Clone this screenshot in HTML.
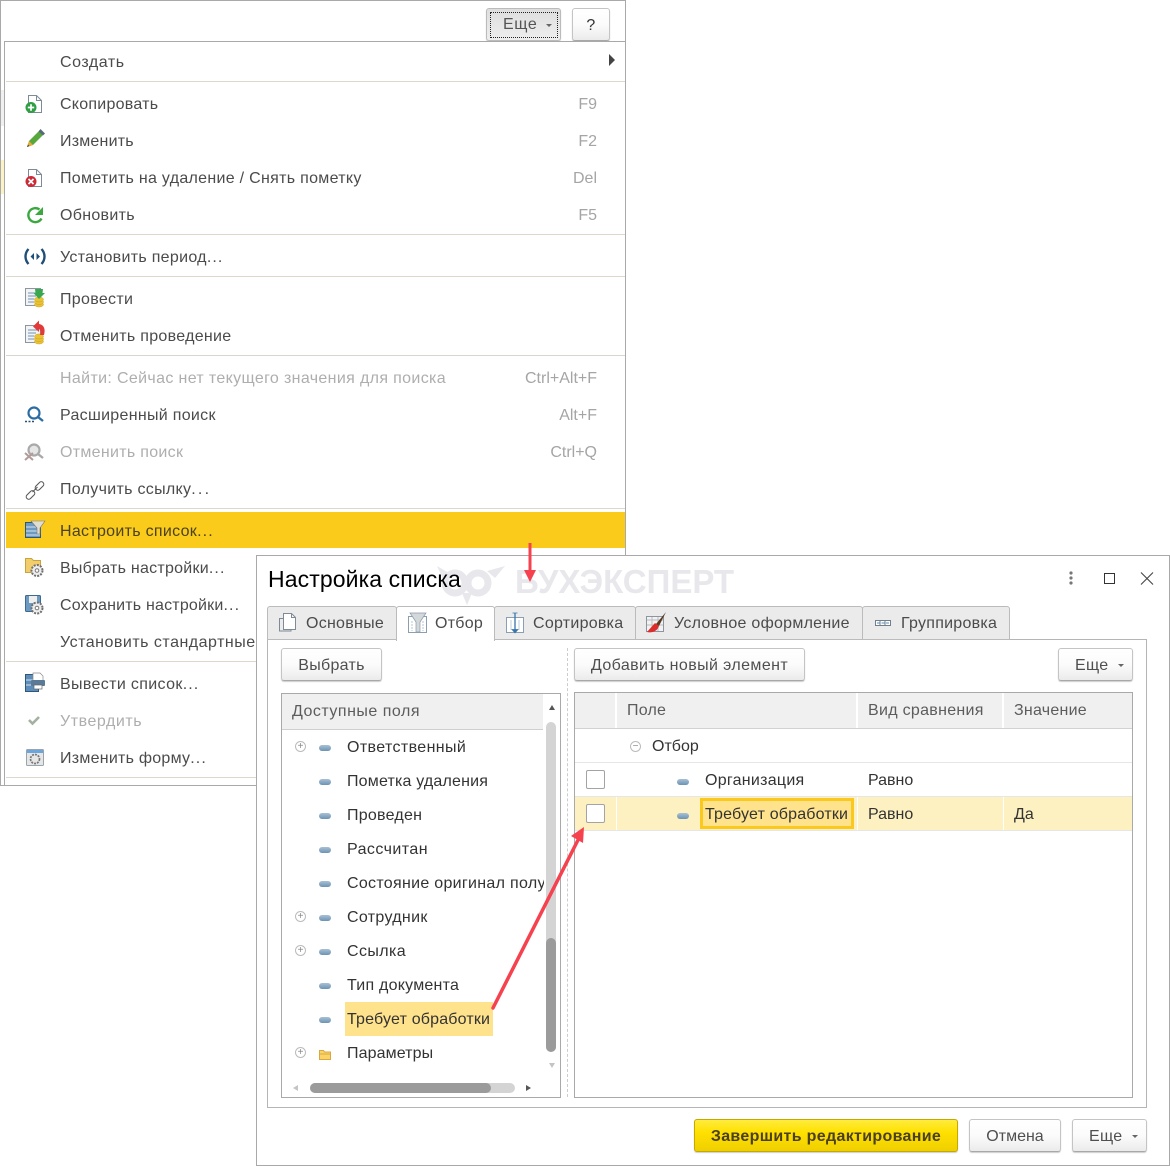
<!DOCTYPE html>
<html><head><meta charset="utf-8"><style>
html,body{margin:0;padding:0;background:#fff}
#r{position:relative;width:1170px;height:1166px;overflow:hidden;background:#fff;font:16px "Liberation Sans",sans-serif;color:#4b4b4b}
#r div,#r span,#r svg{position:absolute;display:block}
.t{white-space:nowrap;line-height:20px;height:20px;letter-spacing:.3px}
b.e{font-weight:normal;letter-spacing:1.1px}
b.e2{font-weight:normal;letter-spacing:2.2px}
.g{color:#aeaeae}
.t.k{color:#a5a5a5;text-align:right;letter-spacing:0}
.sep{left:6px;width:619px;height:1px;background:#dcd9cc}
.btn{box-sizing:border-box;border:1px solid #c4c4c4;border-bottom-color:#a8a8a8;border-radius:3px;background:linear-gradient(#fff 0%,#fbfbfb 50%,#ebebeb 100%);box-shadow:0 1px 1px #ccc;text-align:center;color:#4f4f4f;line-height:33px;letter-spacing:.3px}
.tab{box-sizing:border-box;height:34px;top:606px;background:#ebebeb;border:1px solid #bbb;border-bottom:1px solid #bbb;border-radius:3px 3px 0 0}
.tt{letter-spacing:.26px}
.t.d{color:#333;font-size:16px;letter-spacing:.18px}
.m{width:12px;height:6px;border-radius:3px;background:linear-gradient(#a9c0d4,#6b93b4)}
.p{width:9px;height:9px;border:1px solid #bbb;border-radius:50%;color:#888;font-size:10px;line-height:9px;text-align:center;background:#fff}
.hd{background:#f0f0f0;height:35px;color:#595959}
</style></head><body><div id="r">

<!-- background window -->
<div style="left:0;top:0;width:626px;height:1px;background:#a9a9a9"></div>
<div style="left:0;top:0;width:1px;height:786px;background:#a9a9a9"></div>
<div style="left:0;top:785px;width:6px;height:1px;background:#a9a9a9"></div>
<div style="left:625px;top:0;width:1px;height:42px;background:#a9a9a9"></div>
<div style="left:1px;top:90px;width:3px;height:36px;background:#f0f0f0"></div>
<div style="left:1px;top:160px;width:3px;height:34px;background:#fdf1c6"></div>

<!-- top buttons -->
<div class="btn" style="left:486px;top:8px;width:75px;height:33px;background:linear-gradient(#dedede,#eee);border-color:#bbb"></div>
<div style="left:490px;top:12px;width:66px;height:24px;border:1px dotted #222"></div>
<div class="t" style="left:503px;top:15px;color:#555;letter-spacing:.6px">Еще</div>
<div style="left:546px;top:24px;border:3px solid transparent;border-top:3px solid #666;border-bottom:0"></div>
<div class="btn" style="left:572px;top:8px;width:38px;height:33px;color:#333">?</div>

<!-- menu -->
<div style="left:4px;top:41px;box-sizing:border-box;width:622px;height:745px;border:1px solid #a9a9a9;background:#fff"></div>
<div style="left:6px;top:512px;width:619px;height:36px;background:#fbcb1b"></div>

<div class="t" style="left:60px;top:53px;letter-spacing:.55px">Создать</div>
<div style="left:609px;top:54px;border-left:6px solid #444;border-top:6px solid transparent;border-bottom:6px solid transparent"></div>
<div class="sep" style="top:81px"></div>

<div class="t" style="left:60px;top:95px;letter-spacing:.25px">Скопировать</div><div class="t k" style="left:500px;width:97px;top:95px">F9</div>
<div class="t" style="left:60px;top:132px;letter-spacing:.2px">Изменить</div><div class="t k" style="left:500px;width:97px;top:132px">F2</div>
<div class="t" style="left:60px;top:169px">Пометить на удаление / Снять пометку</div><div class="t k" style="left:500px;width:97px;top:169px">Del</div>
<div class="t" style="left:60px;top:206px">Обновить</div><div class="t k" style="left:500px;width:97px;top:206px">F5</div>
<div class="sep" style="top:234px"></div>
<div class="t" style="left:60px;top:248px">Установить период<b class="e">...</b></div>
<div class="sep" style="top:276px"></div>
<div class="t" style="left:60px;top:290px">Провести</div>
<div class="t" style="left:60px;top:327px">Отменить проведение</div>
<div class="sep" style="top:355px;background:#d9d6d0"></div>
<div class="t g" style="left:60px;top:369px;letter-spacing:.35px">Найти: Сейчас нет текущего значения для поиска</div><div class="t k" style="left:450px;width:147px;top:369px">Ctrl+Alt+F</div>
<div class="t" style="left:60px;top:406px">Расширенный поиск</div><div class="t k" style="left:500px;width:97px;top:406px">Alt+F</div>
<div class="t g" style="left:60px;top:443px">Отменить поиск</div><div class="t k" style="left:500px;width:97px;top:443px">Ctrl+Q</div>
<div class="t" style="left:60px;top:480px">Получить ссылку<b class="e2">...</b></div>
<div class="sep" style="top:508px"></div>
<div class="t" style="left:60px;top:522px;color:#4a4220">Настроить список<b class="e">...</b></div>
<div class="t" style="left:60px;top:559px;letter-spacing:.25px">Выбрать настройки<b class="e">...</b></div>
<div class="t" style="left:60px;top:596px;letter-spacing:.2px">Сохранить настройки<b class="e">...</b></div>
<div class="t" style="left:60px;top:633px;letter-spacing:.5px">Установить стандартные настройки</div>
<div class="sep" style="top:661px"></div>
<div class="t" style="left:60px;top:675px;letter-spacing:.35px">Вывести список<b class="e">...</b></div>
<div class="t g" style="left:60px;top:712px;letter-spacing:.55px">Утвердить</div>
<div class="t" style="left:60px;top:749px;letter-spacing:.25px">Изменить форму<b class="e">...</b></div>
<div class="sep" style="top:777px"></div>

<!-- menu icons -->
<svg style="left:20px;top:90px" width="30" height="680" viewBox="0 0 30 680">
 <!-- copy -->
 <path d="M8.500 5.500h8l5 5v12h-13z" fill="#fff" stroke="#7d8a97"/><path d="M16.500 5.500v5h5" fill="none" stroke="#7d8a97"/>
 <circle cx="11" cy="17.500" r="5.500" fill="#2f9e44"/><path d="M7.800 17.500h6.400M11 14.300v6.400" stroke="#fff" stroke-width="1.700"/>
 <!-- pencil -->
 <path d="M7 57l2-6 11-11 4 4-11 11z" fill="#58a83c"/><path d="M18.500 41.500l2-2.500 4.500 4.500-2 2z" fill="#56697a"/><path d="M7 57l2-6 4 4z" fill="#e9a93a"/><path d="M7 57l1-2.500 1.500 1.500z" fill="#444"/>
 <!-- delete -->
 <path d="M8.500 79.500h8l5 5v12h-13z" fill="#fff" stroke="#7d8a97"/><path d="M16.500 79.500v5h5" fill="none" stroke="#7d8a97"/>
 <circle cx="11" cy="91.500" r="5.500" fill="#cc2a36"/><path d="M8.500 89l5 5M13.500 89l-5 5" stroke="#fff" stroke-width="1.700"/>
 <!-- refresh -->
 <path d="M19.500 119.500a7 7 0 1 0 2 9" fill="none" stroke="#3aa83f" stroke-width="2.400"/><path d="M23 117v8h-8z" fill="#3aa83f"/>
 <!-- period -->
 <path d="M8.500 159c-4 4.500-4 10.500 0 15M21.500 159c4 4.500 4 10.500 0 15" fill="none" stroke="#1f4f78" stroke-width="2.400"/><path d="M14 163v7l-3.500-3.500zM16.500 163v7l3.500-3.500z" fill="#1f4f78"/>
 <!-- post -->
 <rect x="5.500" y="198.500" width="15" height="17" fill="#f3f3f3" stroke="#8a97a3"/><path d="M8 203h9M8 206h8M8 209h6M8 212h6" stroke="#6f93b5"/>
 <g fill="#e9c333" stroke="#c9a020" stroke-width=".5"><ellipse cx="19" cy="214.500" rx="4.500" ry="2.500"/><ellipse cx="19" cy="212" rx="4.500" ry="2.500"/><ellipse cx="19" cy="209.500" rx="4.500" ry="2.500"/></g>
 <path d="M15 199h8l-.5 4h2.500l-6 6-5.500-6h2z" fill="#38a850"/>
 <!-- unpost -->
 <rect x="5.500" y="235.500" width="15" height="17" fill="#f3f3f3" stroke="#8a97a3"/><path d="M8 240h9M8 243h8M8 246h6M8 249h6" stroke="#6f93b5"/>
 <g fill="#e9c333" stroke="#c9a020" stroke-width=".5"><ellipse cx="19" cy="251.500" rx="4.500" ry="2.500"/><ellipse cx="19" cy="249" rx="4.500" ry="2.500"/><ellipse cx="19" cy="246.500" rx="4.500" ry="2.500"/></g>
 <path d="M19 234c4 .5 7 4 5 11l-4 0c1-3 .5-5-1-6v3l-6-5.500 6-6z" fill="#e2393a"/>
 <!-- search -->
 <circle cx="14" cy="323" r="5.500" fill="none" stroke="#2a6da4" stroke-width="2.200"/><path d="M18 327l5 4" stroke="#2a6da4" stroke-width="2.400"/><path d="M5 331.500h2M8.500 331.500h2M12 331.500h2" stroke="#2a4f70" stroke-width="1.600"/>
 <!-- cancel search -->
 <circle cx="14" cy="360" r="5.500" fill="#e6e6e6" stroke="#a9a9a9" stroke-width="2.200"/><path d="M18 364l5 4" stroke="#a9a9a9" stroke-width="2.400"/><path d="M5 363l8 7M13 363l-8 7" stroke="#b39b99" stroke-width="2"/>
 <!-- link -->
 <g fill="none" stroke="#5a5a5a" stroke-width="1.100"><rect x="14.500" y="393.500" width="10" height="5" rx="2.500" transform="rotate(-45 19.500 396)"/><rect x="5.500" y="402.500" width="10" height="5" rx="2.500" transform="rotate(-45 10.500 405)"/></g><path d="M12.500 402l5-5" stroke="#5a5a5a" stroke-width="1.100"/>
 <!-- settings list -->
 <rect x="5.500" y="432.500" width="15" height="15" fill="#6d9ac0" stroke="#2c587c"/><path d="M6 437h14M6 441h14M6 445h14" stroke="#d8e4ee"/><path d="M11 431h14l-5 7v6h-3v-6z" fill="#deded2" stroke="#777" stroke-width=".6"/>
 <!-- choose settings -->
 <path d="M5.500 468.500h6l2 2h7v12h-15z" fill="#f2cd6c" stroke="#c9a33f"/><circle cx="17" cy="480.500" r="5.500" fill="#eee" stroke="#6f6f6f" stroke-width="2" stroke-dasharray="2 1.200"/><circle cx="17" cy="480.500" r="1.800" fill="#fff" stroke="#777"/>
 <!-- save settings -->
 <rect x="5.500" y="505.500" width="15" height="16" rx="1" fill="#6d9ac0" stroke="#3d6a92"/><rect x="9" y="506" width="8" height="7" fill="#eee"/><circle cx="17" cy="518" r="5.500" fill="#eee" stroke="#6f6f6f" stroke-width="2" stroke-dasharray="2 1.200"/><circle cx="17" cy="518" r="1.800" fill="#fff" stroke="#777"/>
 <!-- print -->
 <rect x="5.500" y="584.500" width="13" height="17" fill="#5d8db8" stroke="#2c587c"/><path d="M6 590h12M6 595h12" stroke="#d8e4ee"/><path d="M13 583h7l3 3v5H13z" fill="#fff" stroke="#888" stroke-width=".7"/><rect x="11" y="590" width="14" height="6" rx="1" fill="#5b7a98"/><rect x="14" y="595" width="8" height="4" fill="#fff" stroke="#666" stroke-width=".7"/>
 <!-- check -->
 <path d="M9 630l3.500 3.500 6.500-6.500" fill="none" stroke="#a4b0a0" stroke-width="2.600"/>
 <!-- change form -->
 <rect x="6.500" y="659.500" width="17" height="16" rx="1" fill="#e6e6e6" stroke="#9aa4ad"/><rect x="7" y="660" width="16" height="3" fill="#6aa5dc"/><circle cx="15" cy="669" r="4.500" fill="none" stroke="#777" stroke-width="1.700" stroke-dasharray="2 1"/>
</svg>

<!-- dialog -->
<div style="left:256px;top:555px;width:914px;height:611px;box-sizing:border-box;border:1px solid #a9a9a9;background:#fff"></div>

<!-- watermark -->
<svg style="left:435px;top:563px" width="70" height="42" viewBox="0 0 70 42"><g fill="none" stroke="#e8e8ec" stroke-width="7"><circle cx="20" cy="20" r="10"/><circle cx="43" cy="20" r="10"/></g><path d="M2 3l12 7-6 6zM70 3L52 8l8 7zM27 30h10l-5 12z" fill="#e8e8ec"/></svg>
<div class="t" style="left:515px;top:563px;height:38px;line-height:38px;font-size:33px;font-weight:bold;color:#e8e8ec;letter-spacing:0">БУХЭКСПЕРТ</div>

<div class="t" style="left:268px;top:565px;height:28px;line-height:28px;font-size:23px;color:#000;letter-spacing:.1px">Настройка списка</div>

<!-- window controls -->
<svg style="left:1060px;top:568px" width="100" height="20" viewBox="0 0 100 20">
 <circle cx="11" cy="5" r="1.600" fill="#777"/><circle cx="11" cy="10" r="1.600" fill="#777"/><circle cx="11" cy="15" r="1.600" fill="#777"/>
 <rect x="44.500" y="5.500" width="10" height="10" fill="none" stroke="#333"/>
 <path d="M81 4.500l12 12M93 4.500l-12 12" stroke="#444" stroke-width="1.100"/>
</svg>

<!-- tab body -->
<div style="left:267px;top:639px;width:880px;height:469px;box-sizing:border-box;border:1px solid #b5b5b5;background:#fff"></div>

<!-- tabs -->
<div class="tab" style="left:267px;width:130px"></div>
<div class="tab" style="left:396px;width:99px;height:35px;background:#fff;border-bottom:0"></div>
<div class="tab" style="left:494px;width:142px"></div>
<div class="tab" style="left:635px;width:228px"></div>
<div class="tab" style="left:862px;width:148px"></div>
<div class="t tt" style="left:306px;top:614px">Основные</div>
<div class="t tt" style="left:435px;top:614px">Отбор</div>
<div class="t tt" style="left:533px;top:614px">Сортировка</div>
<div class="t tt" style="left:674px;top:614px">Условное оформление</div>
<div class="t tt" style="left:901px;top:614px">Группировка</div>
<svg style="left:270px;top:606px" width="740" height="34" viewBox="0 0 740 34">
 <path d="M13.500 7.500h8l4 4v12h-12z" fill="#fff" stroke="#7f8a94"/><path d="M21.500 7.500v4h4M13 12.500H9.500V25H21v-1.500" fill="none" stroke="#7f8a94"/>
 <rect x="138.500" y="10.500" width="18" height="16" fill="#fff" stroke="#8aa0b2"/><path d="M142 15v10M153 15v10" stroke="#b9c6d1" fill="none" stroke-dasharray="2 1"/><path d="M140 7h16l-6 9v10h-4V16z" fill="#d3d8db" stroke="#8a9aa6" stroke-width=".7"/>
 <rect x="236.500" y="11.500" width="17" height="15" fill="#fff" stroke="#8aa0b2"/><path d="M241 14v10M249 14v10" stroke="#c0cfd9"/><path d="M245 7v18" stroke="#3a74ad" stroke-width="1.300"/><path d="M242 23.500l3 3.500 3-3.500zM242.500 7h5" fill="#3a74ad" stroke="#3a74ad" stroke-width=".7"/>
 <rect x="376.500" y="10.500" width="17" height="15" fill="#f2f2f2" stroke="#8a97a3"/><path d="M377 14h16M382 11v14M388 11v14M377 19h16" stroke="#bbb"/><path d="M396 6l-10 12 3 2z" fill="#5a3a22"/><path d="M385 17l-8 9c4 1 10 0 12-6z" fill="#dd2a2a"/>
 <rect x="605.500" y="14.500" width="15" height="5" fill="#fff" stroke="#6f7f8c"/><path d="M610 14.500v5M615 14.500v5" stroke="#6f7f8c"/><path d="M607 17h3M611.500 17h3M616 17h3" stroke="#5d8db8"/>
</svg>

<!-- Left pane toolbar -->
<div class="btn" style="left:281px;top:648px;width:101px;height:33px">Выбрать</div>
<div style="left:567px;top:648px;width:0;height:449px;border-left:1px dashed #ccc"></div>
<div class="btn" style="left:574px;top:648px;width:231px;height:33px;letter-spacing:.4px">Добавить новый элемент</div>
<div class="btn" style="left:1058px;top:648px;width:75px;height:33px;text-align:left;padding-left:16px">Еще</div>
<div style="left:1118px;top:664px;border:3px solid transparent;border-top:3px solid #666;border-bottom:0"></div>

<!-- Available fields -->
<div style="left:281px;top:693px;width:280px;height:405px;box-sizing:border-box;border:1px solid #a9a9a9;background:#fff"></div>
<div class="hd" style="left:282px;top:694px;width:261px"></div>
<div style="left:282px;top:729px;width:261px;height:1px;background:#cfcfcf"></div>
<div class="t" style="left:292px;top:702px;color:#5c5c5c;letter-spacing:.5px">Доступные поля</div>
<div style="left:549px;top:705px;border:3px solid transparent;border-bottom:5px solid #555;border-top:0"></div>
<div style="left:546px;top:722px;width:10px;height:330px;border-radius:5px;background:#d4d4d4"></div>
<div style="left:546px;top:938px;width:10px;height:114px;border-radius:5px;background:#9b9b9b"></div>
<div style="left:549px;top:1063px;border:3px solid transparent;border-top:5px solid #c4c4c4;border-bottom:0"></div>
<div style="left:293px;top:1085px;border:3px solid transparent;border-right:5px solid #c4c4c4;border-left:0"></div>
<div style="left:526px;top:1085px;border:3px solid transparent;border-left:5px solid #555;border-right:0"></div>
<div style="left:310px;top:1083px;width:205px;height:10px;border-radius:5px;background:#d4d4d4"></div>
<div style="left:310px;top:1083px;width:181px;height:10px;border-radius:5px;background:#9b9b9b"></div>

<div style="left:345px;top:1002px;width:148px;height:34px;background:#fee28c"></div>

<div class="p" style="left:295px;top:741px">+</div>
<div class="p" style="left:295px;top:911px">+</div>
<div class="p" style="left:295px;top:945px">+</div>
<div class="p" style="left:295px;top:1047px">+</div>

<div class="m" style="left:319px;top:745px"></div>
<div class="m" style="left:319px;top:779px"></div>
<div class="m" style="left:319px;top:813px"></div>
<div class="m" style="left:319px;top:847px"></div>
<div class="m" style="left:319px;top:881px"></div>
<div class="m" style="left:319px;top:915px"></div>
<div class="m" style="left:319px;top:949px"></div>
<div class="m" style="left:319px;top:983px"></div>
<div class="m" style="left:319px;top:1017px"></div>
<svg style="left:318px;top:1049px" width="14" height="12" viewBox="0 0 14 12"><path d="M1.500 1.500h4l1 1.500h6v7.500h-11z" fill="#fbd468" stroke="#d9a83e"/><path d="M2 5h10" stroke="#d9a83e"/></svg>

<div class="t d" style="left:347px;top:738px;letter-spacing:.38px">Ответственный</div>
<div class="t d" style="left:347px;top:772px">Пометка удаления</div>
<div class="t d" style="left:347px;top:806px;letter-spacing:.25px">Проведен</div>
<div class="t d" style="left:347px;top:840px;letter-spacing:.44px">Рассчитан</div>
<div class="t d" style="left:347px;top:874px;width:197px;overflow:hidden;letter-spacing:.3px">Состояние оригинал получен</div>
<div class="t d" style="left:347px;top:908px;letter-spacing:.33px">Сотрудник</div>
<div class="t d" style="left:347px;top:942px;letter-spacing:.4px">Ссылка</div>
<div class="t d" style="left:347px;top:976px;letter-spacing:.23px">Тип документа</div>
<div class="t d" style="left:347px;top:1010px">Требует обработки</div>
<div class="t d" style="left:347px;top:1044px;letter-spacing:.1px">Параметры</div>

<!-- Filter table -->
<div style="left:574px;top:692px;width:559px;height:406px;box-sizing:border-box;border:1px solid #a9a9a9;background:#fff"></div>
<div class="hd" style="left:575px;top:693px;width:40px"></div>
<div class="hd" style="left:617px;top:693px;width:239px"></div>
<div class="hd" style="left:858px;top:693px;width:144px"></div>
<div class="hd" style="left:1004px;top:693px;width:128px"></div>
<div style="left:575px;top:728px;width:557px;height:1px;background:#d2d2d2"></div>
<div class="t" style="left:627px;top:701px;color:#5c5c5c;letter-spacing:.2px">Поле</div>
<div class="t" style="left:868px;top:701px;color:#5c5c5c">Вид сравнения</div>
<div class="t" style="left:1014px;top:701px;color:#5c5c5c;letter-spacing:.25px">Значение</div>

<div class="p" style="left:630px;top:741px">&minus;</div>
<div class="t d" style="left:652px;top:737px;letter-spacing:0">Отбор</div>
<div style="left:575px;top:762px;width:557px;height:1px;background:#e6e6e6"></div>

<div class="t d" style="left:705px;top:771px;letter-spacing:.27px">Организация</div>
<div class="t d" style="left:868px;top:771px;letter-spacing:0">Равно</div>
<div class="m" style="left:677px;top:779px"></div>
<div style="left:586px;top:770px;width:17px;height:17px;border:1px solid #a3a3a3;border-radius:2px;background:#fff"></div>
<div style="left:575px;top:796px;width:557px;height:1px;background:#e6e6e6"></div>

<div style="left:575px;top:797px;width:557px;height:33px;background:#fdf1c2"></div>
<div style="left:616px;top:797px;width:1px;height:33px;background:#fff"></div>
<div style="left:857px;top:797px;width:1px;height:33px;background:#fff"></div>
<div style="left:1003px;top:797px;width:1px;height:33px;background:#fff"></div>
<div style="left:575px;top:830px;width:557px;height:1px;background:#e6e6e6"></div>
<div style="left:700px;top:798px;width:154px;height:31px;box-sizing:border-box;border:3px solid #fbc81e;background:#fee28c"></div>
<div class="m" style="left:677px;top:813px"></div>
<div style="left:586px;top:804px;width:17px;height:17px;border:1px solid #a3a3a3;border-radius:2px;background:#fff"></div>
<div class="t d" style="left:705px;top:805px">Требует обработки</div>
<div class="t d" style="left:868px;top:805px;letter-spacing:0">Равно</div>
<div class="t d" style="left:1014px;top:805px;letter-spacing:0">Да</div>

<!-- Bottom -->
<div class="btn" style="left:694px;top:1119px;width:264px;height:33px;border:1px solid #c4a900;background:linear-gradient(#ffec3d,#ffe000 40%,#efcf00);color:#4a4020;font-weight:bold;letter-spacing:.33px">Завершить редактирование</div>
<div class="btn" style="left:969px;top:1119px;width:92px;height:33px;letter-spacing:0">Отмена</div>
<div class="btn" style="left:1072px;top:1119px;width:75px;height:33px;text-align:left;padding-left:16px">Еще</div>
<div style="left:1132px;top:1135px;border:3px solid transparent;border-top:3px solid #666;border-bottom:0"></div>

<!-- arrows -->
<svg style="left:0;top:0" width="1170" height="1166" viewBox="0 0 1170 1166">
 <path d="M530 543v28" stroke="#f6414e" stroke-width="3" fill="none"/><path d="M524 570h12l-6 12z" fill="#f6414e"/>
 <path d="M493 1008L578 840" stroke="#f6414e" stroke-width="3.500" fill="none" stroke-linecap="round"/><path d="M571 836l13-9-1 16z" fill="#f6414e"/>
</svg>
</div></body></html>
